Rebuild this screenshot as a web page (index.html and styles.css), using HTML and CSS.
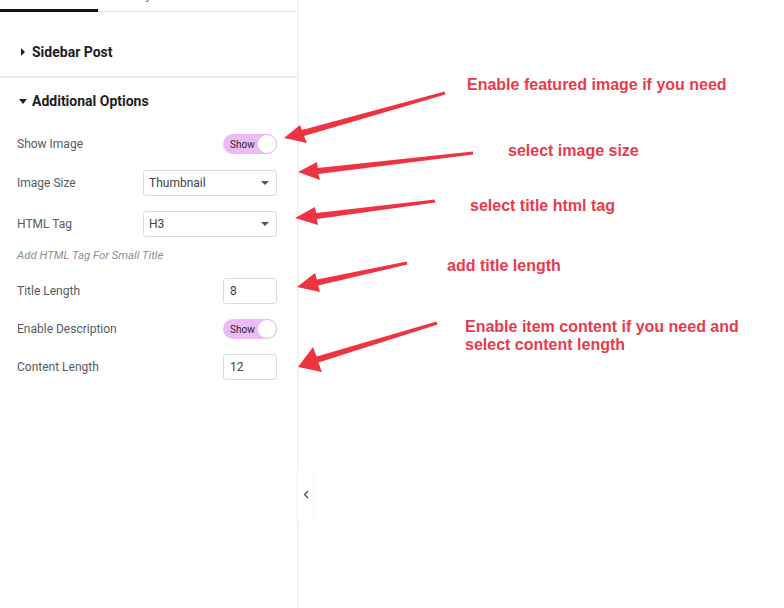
FILE: index.html
```html
<!DOCTYPE html>
<html>
<head>
<meta charset="utf-8">
<link rel="stylesheet" href="styles.css">
</head>
<body>
<div class="app">
  <aside class="panel">
    <div class="tabs">
      <div class="tab active"><span class="tab-label">Content</span></div>
      <div class="tab"><span class="tab-label">Style</span></div>
      <div class="tab"><span class="tab-label">Advanced</span></div>
    </div>
    <section class="section closed">
      <div class="section-head"><span class="caret-right"></span>Sidebar Post</div>
    </section>
    <section class="section open">
      <div class="section-head"><span class="caret-down"></span>Additional Options</div>
      <div class="controls">
        <div class="row r-first">
          <span class="label">Show Image</span>
          <span class="switch"><span class="switch-text">Show</span><span class="knob"></span></span>
        </div>
        <div class="row r16">
          <span class="label">Image Size</span>
          <span class="select">Thumbnail<span class="select-caret"></span></span>
        </div>
        <div class="row r15">
          <span class="label">HTML Tag</span>
          <span class="select">H3<span class="select-caret"></span></span>
        </div>
        <div class="note">Add HTML Tag For Small Title</div>
        <div class="row r16">
          <span class="label">Title Length</span>
          <span class="num">8</span>
        </div>
        <div class="row r15">
          <span class="label">Enable Description</span>
          <span class="switch"><span class="switch-text">Show</span><span class="knob"></span></span>
        </div>
        <div class="row r15">
          <span class="label">Content Length</span>
          <span class="num">12</span>
        </div>
      </div>
    </section>
    <div class="collapse"><svg width="6" height="9" viewBox="0 0 6 9"><path d="M5 1 L1.5 4.5 L5 8" fill="none" stroke="#444" stroke-width="1.2"/></svg></div>
  </aside>
  <main class="canvas"></main>
</div>
<svg class="notes" width="784" height="608" viewBox="0 0 784 608">
  <g fill="#ee3442">
    <polygon points="284,138 307,143 304,136 445.4,94.4 444.6,91.6 302,130 300,125"/>
    <polygon points="298,172 320,180 318.3,174 473.2,154.5 472.8,151.5 317.7,168 317,162"/>
    <polygon points="295,218 318,225 316.9,219 435.2,202.5 434.8,199.5 316.1,213 315,207"/>
    <polygon points="297,287 320,292 318.1,285.4 407.3,264.5 406.7,261.5 316.9,279.6 315,273"/>
    <polygon points="298,367 322,372 318.4,362.4 437.5,324.4 436.5,321.6 316.6,356.6 313,347"/>
  </g>
  <g class="note-text">
    <text x="467" y="90">Enable featured image if you need</text>
    <text x="508" y="156">select image size</text>
    <text x="470" y="211">select title html tag</text>
    <text x="447" y="271">add title length</text>
    <text x="465" y="332">Enable item content if you need and</text>
    <text x="465" y="349.5">select content length</text>
  </g>
</svg>
</body>
</html>
```

FILE: styles.css
```css
html, body {
  margin: 0;
  padding: 0;
  background: #fff;
}
body {
  width: 784px;
  height: 608px;
  overflow: hidden;
  position: relative;
  font-family: Roboto, "Liberation Sans", sans-serif;
}
.app {
  display: flex;
  height: 608px;
}
.panel {
  width: 297px;
  flex: 0 0 297px;
  border-right: 2px solid #f1f2f3;
  position: relative;
  background: #fff;
}
.canvas {
  flex: 1;
  background: #fff;
}
.tabs {
  display: flex;
  height: 12px;
  overflow: hidden;
}
.tab {
  width: 99px;
  height: 12px;
  box-sizing: border-box;
  border-bottom: 1px solid #e3e3e3;
  text-align: center;
  font-size: 12px;
  color: #555;
}
.tab.active {
  width: 98px;
  border-bottom: 3px solid #111;
  color: #111;
}
.tab-label {
  display: block;
  line-height: 14px;
  margin-top: -12px;
}
.section {
  padding: 0 20px 0 17px;
}
.section.closed {
  padding-top: 28px;
  padding-bottom: 12px;
  border-bottom: 2px solid #e9eaeb;
}
.section.open {
  padding-top: 11px;
}
.section-head {
  display: flex;
  align-items: center;
  height: 24px;
  font-size: 14px;
  font-weight: 700;
  color: #1d1d1d;
}
.caret-right {
  width: 0;
  height: 0;
  border-top: 4px solid transparent;
  border-bottom: 4px solid transparent;
  border-left: 4px solid #222;
  margin: 0 7px 0 4px;
}
.caret-down {
  width: 0;
  height: 0;
  border-left: 4px solid transparent;
  border-right: 4px solid transparent;
  border-top: 5px solid #222;
  margin: 0 5px 0 2px;
}
.controls {
  display: flex;
  flex-direction: column;
}
.row {
  display: flex;
  align-items: center;
  justify-content: space-between;
}
.r-first { margin-top: 21px; }
.r16 { margin-top: 16px; }
.r15 { margin-top: 15px; }
.label {
  font-size: 12px;
  color: #555b61;
}
.switch {
  position: relative;
  width: 54px;
  height: 20px;
  border-radius: 10px;
  background: #ebbaf7;
  display: flex;
  align-items: center;
}
.switch-text {
  font-size: 10px;
  color: #2a2a2a;
  margin-left: 7px;
}
.knob {
  position: absolute;
  right: 0;
  top: 0;
  width: 18px;
  height: 18px;
  border-radius: 50%;
  background: #fff;
  border: 1px solid #dcc2e6;
}
.select {
  position: relative;
  width: 134px;
  height: 26px;
  box-sizing: border-box;
  border: 1px solid #d9dcdf;
  border-radius: 3px;
  font-size: 12px;
  color: #3d4247;
  display: flex;
  align-items: center;
  padding-left: 5px;
}
.select-caret {
  position: absolute;
  right: 7px;
  top: 10px;
  width: 0;
  height: 0;
  border-left: 4px solid transparent;
  border-right: 4px solid transparent;
  border-top: 4px solid #555;
}
.num {
  width: 54px;
  height: 26px;
  box-sizing: border-box;
  border: 1px solid #d9dcdf;
  border-radius: 3px;
  font-size: 12px;
  color: #3d4247;
  display: flex;
  align-items: center;
  padding-left: 6px;
}
.note {
  margin-top: 11px;
  height: 14px;
  line-height: 14px;
  font-size: 11.4px;
  font-style: italic;
  color: #8a8f94;
}
.collapse {
  position: absolute;
  left: 298px;
  top: 469px;
  width: 15px;
  height: 51px;
  background: #fff;
  box-shadow: 1px 0 2px rgba(0,0,0,0.05);
  display: flex;
  align-items: center;
  justify-content: center;
}
.notes {
  position: absolute;
  left: 0;
  top: 0;
  pointer-events: none;
}
.note-text text {
  font-family: "Liberation Sans", Arial, sans-serif;
  font-weight: 700;
  font-size: 16px;
  fill: #e83a4b;
}
```
